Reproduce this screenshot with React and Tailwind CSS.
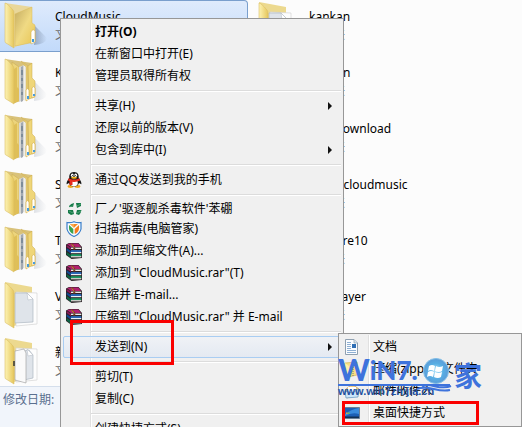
const LEFT_FILES = [
  { name: "CloudMusic", kind: "empty", selected: true },
  { name: "Kugou", kind: "full" },
  { name: "cache", kind: "full" },
  { name: "Sogou", kind: "full" },
  { name: "Tencent", kind: "full" },
  { name: "Video", kind: "doc" },
  { name: "新建文件夹", kind: "docs" },
];

const RIGHT_FILES = [
  { name: "kankan", kind: "doc" },
  { name: "shaoan", kind: "full" },
  { name: "WebDownload", kind: "full" },
  { name: "Qihoocloudmusic", kind: "full" },
  { name: "Capture10", kind: "full" },
  { name: "WMPlayer", kind: "doc" },
];

const MENU = [
  { label: "打开(O)", bold: true },
  { label: "在新窗口中打开(E)" },
  { label: "管理员取得所有权" },
  { separator: true },
  { label: "共享(H)", submenu: true },
  { label: "还原以前的版本(V)" },
  { label: "包含到库中(I)", submenu: true },
  { separator: true },
  { label: "通过QQ发送到我的手机", icon: QQIcon },
  { separator: true },
  { label: "厂ノ'驱逐舰杀毒软件'苯硼", icon: AntivirusIcon, short: true },
  { label: "扫描病毒(电脑管家)", icon: ShieldIcon },
  { label: "添加到压缩文件(A)...", icon: RarIcon },
  { label: '添加到 "CloudMusic.rar"(T)', icon: RarIcon },
  { label: "压缩并 E-mail...", icon: RarIcon },
  { label: '压缩到 "CloudMusic.rar" 并 E-mail', icon: RarIcon },
  { separator: true },
  { label: "发送到(N)", submenu: true, active: true },
  { separator: true },
  { label: "剪切(T)" },
  { label: "复制(C)" },
  { separator: true },
  { label: "创建快捷方式(S)" },
];

const SEND_TO = [
  { label: "文档", icon: DocumentIcon },
  { label: "压缩(zipped)文件夹", icon: ZipIcon },
  { label: "邮件收件人", icon: MailIcon },
  { label: "桌面快捷方式", icon: DesktopIcon },
];

function FolderIcon({ kind }) {
  return (
    <svg viewBox="0 0 44 48" className="h-12 w-11 shrink-0" aria-hidden="true">
      <defs>
        <linearGradient id="cover" x1="0" x2="1">
          <stop offset="0" stopColor="#fdf3b4" />
          <stop offset="1" stopColor="#e6c75c" />
        </linearGradient>
        <linearGradient id="front" x1="0" x2="1" y2="1">
          <stop offset="0" stopColor="#c4ac62" />
          <stop offset="0.5" stopColor="#f0da84" />
          <stop offset="1" stopColor="#e8c552" />
        </linearGradient>
        <linearGradient id="shade" x1="0" x2="1">
          <stop offset="0" stopColor="#64748b" stopOpacity="0.5" />
          <stop offset="1" stopColor="#64748b" stopOpacity="0" />
        </linearGradient>
      </defs>
      {(kind === "empty" || kind === "full") && (
        <path d="M31 24 L43 36 Q42 42 30 43Z" fill="url(#shade)" opacity={kind === "full" ? 0.4 : 1} />
      )}
      {kind === "empty" && (
        <>
          <path d="M1 1 L28 5 V40 L10 45Z" fill="#e9d79a" />
          <path d="M11 12 L28 5 V21 L31 23 V40 L11 44Z" fill="url(#front)" stroke="#d8ba5c" strokeWidth="0.5" />
          <path d="M27 30 q2 -4 4 -1 V40 L27 42Z" fill="#fff" stroke="#d8b246" strokeWidth="0.6" />
          <path d="M28 37 h2 v3 h-2Z" fill="#3f9be0" />
        </>
      )}
      {kind === "full" && (
        <>
          <path d="M1 1 L28 5 V38 L10 45Z" fill="#d9c27a" />
          <path d="M8 4 L15 9 V43 L10 45Z" fill="#ecd47c" stroke="#c9aa50" strokeWidth="0.5" />
          <path d="M15 9 L20 7 V42 L15 44Z" fill="#d8d8d4" />
          <path d="M17 9 L19 8 V43 L17 44Z" fill="#a2a9b2" />
          <path d="M18 12v5M18 20v3M18 26v4M18 34v3" stroke="#5b7181" />
          <path d="M20 8 L22 7 V41 L20 43Z" fill="#efefeb" />
          <path d="M17 3 L24 8 V41 L22 42 V9Z" fill="#e6cc70" stroke="#c9aa50" strokeWidth="0.4" />
          <path d="M24 8 L28 5 V20 L31 23 V39 L25 41Z" fill="#efd679" stroke="#cba94a" strokeWidth="0.5" />
          <path d="M10 11 L13 9 V29 L15 31 V43 L10 45Z" fill="#dfbf58" />
          <path d="M22 32 q1 -3 3 0 V41 L22 43Z M28 30 q1 -3 3 0 V38 L28 40Z" fill="#fff" stroke="#d8b246" strokeWidth="0.7" />
          <path d="M23 38h2v3h-2ZM29 36h2v2h-2Z" fill="#479ddd" />
        </>
      )}
      {(kind === "doc" || kind === "docs") && (
        <>
          <path d="M1 0 L28 5 V38 L10 44Z" fill="#ecd98f" />
          <path d="M12 10 L33 11 V42 L12 44Z" fill="#fdfdfd" stroke="#d4d4d4" strokeWidth="0.7" />
          <path
            d={kind === "doc" ? "M11 11 L23 11 L29 17 V40 L11 41Z" : "M20 13 L25 12 L29 17 V40 L20 42Z"}
            fill="#dfe4ea"
            stroke="#aeb7c1"
            strokeWidth="0.7"
          />
          <path d="M23 11 L29 17 L24 18Z" fill="#fff" stroke="#aeb7c1" strokeWidth="0.5" />
          {kind === "docs" && (
            <path d="M11 13 L20 11 L22 15 V45 L11 42Z" fill="#fafafa" stroke="#999" strokeWidth="0.6" />
          )}
        </>
      )}
      <path d="M1 1 Q3 1 9 8 Q10 9 10 12 V46 L2 41 Q1 41 1 39Z" fill="url(#cover)" stroke="#dabd63" strokeWidth="0.6" />
      {kind === "docs" && <path d="M10 23 v5" stroke="#333" strokeWidth="1.5" />}
    </svg>
  );
}

function QQIcon() {
  return (
    <svg viewBox="0 0 16 16" className="size-4" aria-hidden="true">
      <ellipse cx="4.500" cy="14.500" rx="3" ry="1.400" fill="#f5a81c" />
      <ellipse cx="11.500" cy="14.500" rx="3" ry="1.400" fill="#f5a81c" />
      <path d="M8 0 C4 0 3 3 3.300 6 C1 9 .2 11 .7 12.300 L3 11 Q4 14.500 8 14.500 T13 11 L15.300 12.300 C15.800 11 15 9 12.700 6 C13 3 12 0 8 0Z" fill="#151515" />
      <ellipse cx="8" cy="11" rx="3.800" ry="3.300" fill="#fff" />
      <ellipse cx="6.300" cy="3.300" rx="1.400" ry="1.700" fill="#fff" />
      <ellipse cx="9.700" cy="3.300" rx="1.400" ry="1.700" fill="#fff" />
      <path d="M6.800 3v1M9.200 3v1" stroke="#111" />
      <ellipse cx="8" cy="5.800" rx="3" ry="1" fill="#f8b71e" />
      <path d="M2.500 6.300 Q8 9 13.500 6.300 L14 8.500 Q10 10.500 6.500 9.800 V13 H3.500 V9 L2 8.400Z" fill="#e62b20" />
    </svg>
  );
}

function AntivirusIcon() {
  return (
    <svg viewBox="0 0 16 16" className="size-4" aria-hidden="true">
      <path d="M3 5 Q5 2.500 8 2 L7 6 H3Z M10 2 H15 V5 L11 7Z M2 9 L7 9 L8 13 L5 14 L2 12Z M11 9 H15.500 Q15 12 13 14 L10 13Z" fill="#147a47" />
      <path d="M3 6 L7 5 M11 5 L15 3 M3 10 L7 12 M11 12 L15 10" stroke="#8ac9a4" strokeWidth="0.5" />
    </svg>
  );
}

function ShieldIcon() {
  return (
    <svg viewBox="0 0 16 16" className="size-4" aria-hidden="true">
      <path d="M1 1.500 Q5 2 8 .7 Q11 2 15 1.500 V8 Q14 13 8 15.500 Q2 13 1 8Z" fill="#f7fbff" stroke="#3b7fca" strokeWidth="1.200" />
      <path d="M3 4 L7.300 8 V13 Q3 11 3 7Z" fill="#39a349" />
      <path d="M13 4 L8.700 8 V13 Q13 11 13 7Z" fill="#f47c1c" />
      <path d="M4 3 H12 L8 6.800Z" fill="#f58a25" />
      <path d="M4 3 H8 V6.800Z" fill="#f9a84a" />
    </svg>
  );
}

function RarIcon() {
  return (
    <svg viewBox="0 0 16 16" className="size-4" aria-hidden="true">
      <path d="M0 1.500 L3 0 H12.500 L16 4 V15 L5.500 16 L0 12Z" fill="#2a2226" />
      <path d="M1 1.300 L3.500 .4 H12.300 L15 4 H5Z" fill="#b3206f" />
      <path d="M.6 2 L5 4.700 V7 L.6 4Z" fill="#8c1758" />
      <path d="M5 4.600 H15.300 V6 H5Z" fill="#f1e9e4" />
      <path d="M.6 5.300 L5 8 V10.800 L.6 7.600Z" fill="#134a94" />
      <path d="M5 7.200 H15.300 V8.900 H5Z" fill="#2b72c9" />
      <path d="M5 9 H15.300 V10.200 H5Z" fill="#e8eef4" />
      <path d="M.6 9 L5 12 V15 L.6 11.500Z" fill="#0d6444" />
      <path d="M5 11.200 H15.300 V13 H5Z" fill="#1b9a63" />
      <path d="M5 13.200 H15.300 V14.300 H5Z" fill="#eef4ee" />
      <path d="M4.500 .8 H6.500 L9.500 4 H7.500Z M7.300 4.500 H9.300 V6.500 H7.300Z" fill="#7d3d20" />
      <path d="M5.500 1.300 L8 3.600" stroke="#d8a948" strokeWidth="0.8" />
    </svg>
  );
}

function DocumentIcon() {
  return (
    <svg viewBox="0 0 16 16" className="size-4" aria-hidden="true">
      <path d="M1.500 .5 H10 L13.500 4 V15.500 H1.500Z" fill="#fbfdff" stroke="#8fa0b0" />
      <path d="M10 .5 V4 H13.500" fill="#dbe6ef" stroke="#8fa0b0" strokeWidth="0.7" />
      <path d="M3 3.500h4M3 5.500h4M3 7.500h4M3 9.500h4M3 11.500h9M3 13.500h9" stroke="#8fb0d3" />
      <path d="M8 5h4v4H8Z" fill="#2f6fb5" />
    </svg>
  );
}

function ZipIcon() {
  return (
    <svg viewBox="0 0 16 16" className="size-4" aria-hidden="true">
      <path d="M1 2 L13 1 V14 L4 16 L1 14Z" fill="#f7df83" stroke="#d6b64c" strokeWidth="0.7" />
      <path d="M1 2 L5 5 V16 L1 14Z" fill="#fff0aa" />
      <path d="M9 2v13" stroke="#777" strokeDasharray="1 1" />
    </svg>
  );
}

function MailIcon() {
  return (
    <svg viewBox="0 0 16 16" className="size-4" aria-hidden="true">
      <path d="M1 7 L8 1 L15 6 V11 L3 15Z" fill="#f4cd83" stroke="#b28d5c" strokeWidth="0.6" />
      <path d="M4 4h8v5H4Z" fill="#fff" />
      <path d="M1 8 L8 10 L15 6 L14 14 L2 15Z" fill="#cce6fa" stroke="#5c92bd" strokeWidth="0.7" />
    </svg>
  );
}

function DesktopIcon() {
  return (
    <svg viewBox="0 0 16 16" className="size-4" aria-hidden="true">
      <path d="M.5 2.500 H15.500 V13.500 H.5Z" fill="#1d5fb4" stroke="#6c7f96" />
      <path d="M1 9 Q8 4 15 3 V9 Q8 7 1 11Z" fill="#3b8bdc" />
      <path d="M1 11.500 H15 V13 H1Z" fill="#122f52" />
      <path d="M2 7.500h1.500v1.500H2Z" fill="#f5a13a" />
      <path d="M4 7.500h1.500v1.500H4Z" fill="#7ac143" />
    </svg>
  );
}

function FileColumn({ files }) {
  return (
    <ul className="flex flex-col gap-1">
      {files.map((file) => (
        <li
          key={file.name}
          className={
            file.selected
              ? "flex h-[52px] items-center rounded-r-sm border border-l-0 border-[#7a9fcd] bg-linear-to-b from-[#dfebfc] to-[#c2dafa] pl-1"
              : "flex h-[52px] items-center pl-1"
          }
        >
          <FolderIcon kind={file.kind} />
          <div className="pl-[7px] leading-[18px] whitespace-nowrap">
            <p className="text-black">{file.name}</p>
            <p className="text-[#6d6d6d]">文件夹</p>
          </div>
        </li>
      ))}
    </ul>
  );
}

function Separator() {
  return (
    <div role="separator" className="flex h-2 items-center pl-7">
      <div className="h-[2px] w-full border-t border-[#dcdcdc] bg-white" />
    </div>
  );
}

function MenuItem({ item }) {
  const Icon = item.icon;
  let classes = "flex w-full items-center rounded-xs border text-left whitespace-nowrap";
  classes += item.short ? " h-[19px]" : " h-[22px]";
  classes += item.active
    ? " border-[#a9cdf2] bg-linear-to-b from-[#eff2f7]/80 to-[#e1e8f2]/80"
    : " border-transparent";
  if (item.bold) classes += " font-bold";

  return (
    <button type="button" role="menuitem" className={classes}>
      <span className="flex w-5 shrink-0 justify-center">{Icon && <Icon />}</span>
      <span className="flex-1 pl-[11px]">{item.label}</span>
      {item.submenu && (
        <svg viewBox="0 0 4 8" className="mr-2 h-2 w-1" aria-hidden="true">
          <path d="M0 0 L4 4 L0 8Z" fill="#111" />
        </svg>
      )}
    </button>
  );
}

function Menu({ items, label, className }) {
  return (
    <div
      role="menu"
      aria-label={label}
      className={"absolute border border-[#979797] bg-[#f0f0f0] p-0.5 " + className}
    >
      <div className="absolute inset-y-px left-[29px] w-[2px] border-l border-[#e0e0e0] bg-white" />
      <div className="relative">
        {items.map((item, i) =>
          item.separator ? <Separator key={i} /> : <MenuItem key={i} item={item} />
        )}
      </div>
    </div>
  );
}

function Watermark() {
  return (
    <div className="pointer-events-none absolute top-[354px] left-[338px] h-11 w-[144px] text-[#3e73dc]">
      <div className="flex h-[30px] items-end font-[family-name:Lato,sans-serif] font-black">
        <span className="text-[30px] leading-[30px]">W</span>
        <span className="text-[26px] leading-[28px]">iN7.</span>
      </div>
      <div className="h-[2px] w-28 bg-[#3e73dc]" />
      <span className="block font-[family-name:Liberation_Sans,sans-serif] text-[11px] leading-[10px] font-bold text-[#2350a0]">
        www.win7zhijia.cn
      </span>
      <svg viewBox="0 0 60 36" className="absolute top-1 left-[76px] h-9 w-[60px]" aria-hidden="true">
        <defs>
          <radialGradient id="globe">
            <stop offset="0" stopColor="#b7e7fb" />
            <stop offset="0.6" stopColor="#58aee3" />
            <stop offset="1" stopColor="#5a9bd8" />
          </radialGradient>
        </defs>
        <path d="M8 28 C16 24 26 33 37 28 M3 31 C14 26 23 35 36 32" fill="none" stroke="#3e73dc" strokeWidth="2" />
        <circle cx="22" cy="13" r="12.500" fill="url(#globe)" stroke="#82bfe6" />
        <path d="M15 8 Q18 6 21 8 L20 13 Q17 11 14 13Z M22 8 Q25 10 29 8 L28 13 Q25 15 21 13Z M14 14 Q17 12 20 14 L19 19 Q16 17 13 19Z M21 14 Q24 16 28 14 L27 19 Q24 21 20 19Z" fill="#fff" />
      </svg>
      <span className="absolute top-1 right-0 font-[family-name:Noto_Sans_CJK_SC,sans-serif] text-[28px] leading-[34px] font-bold">
        家
      </span>
    </div>
  );
}

export default function App() {
  return (
    <div className="relative flex h-screen flex-col overflow-hidden bg-[#fcfcfc] font-['Noto_Sans','Noto_Sans_CJK_SC',sans-serif] text-[12px] text-black">
      <main className="grid min-h-0 flex-1 grid-cols-[248px_1fr] content-start gap-x-1.5 overflow-hidden">
        <FileColumn files={LEFT_FILES} />
        <FileColumn files={RIGHT_FILES} />
      </main>
      <footer className="h-[41px] shrink-0 border-t border-[#d5dfec] bg-[#f1f5fb] pt-1 pl-[3px] leading-[18px] text-[#5a6f8f]">
        修改日期:
      </footer>

      <Menu items={MENU} label="文件夹" className="top-[18px] left-[60px] w-[284px]" />
      <Menu items={SEND_TO} label="发送到" className="top-[333px] left-[338px] w-[184px]" />

      <Watermark />

      {/* Step highlights */}
      <div className="pointer-events-none absolute top-[320px] left-[70px] h-[45px] w-[104px] border-3 border-[#fa0000]" />
      <div className="pointer-events-none absolute top-[401px] left-[342px] h-6 w-[137px] border-3 border-[#fa0000]" />
    </div>
  );
}
